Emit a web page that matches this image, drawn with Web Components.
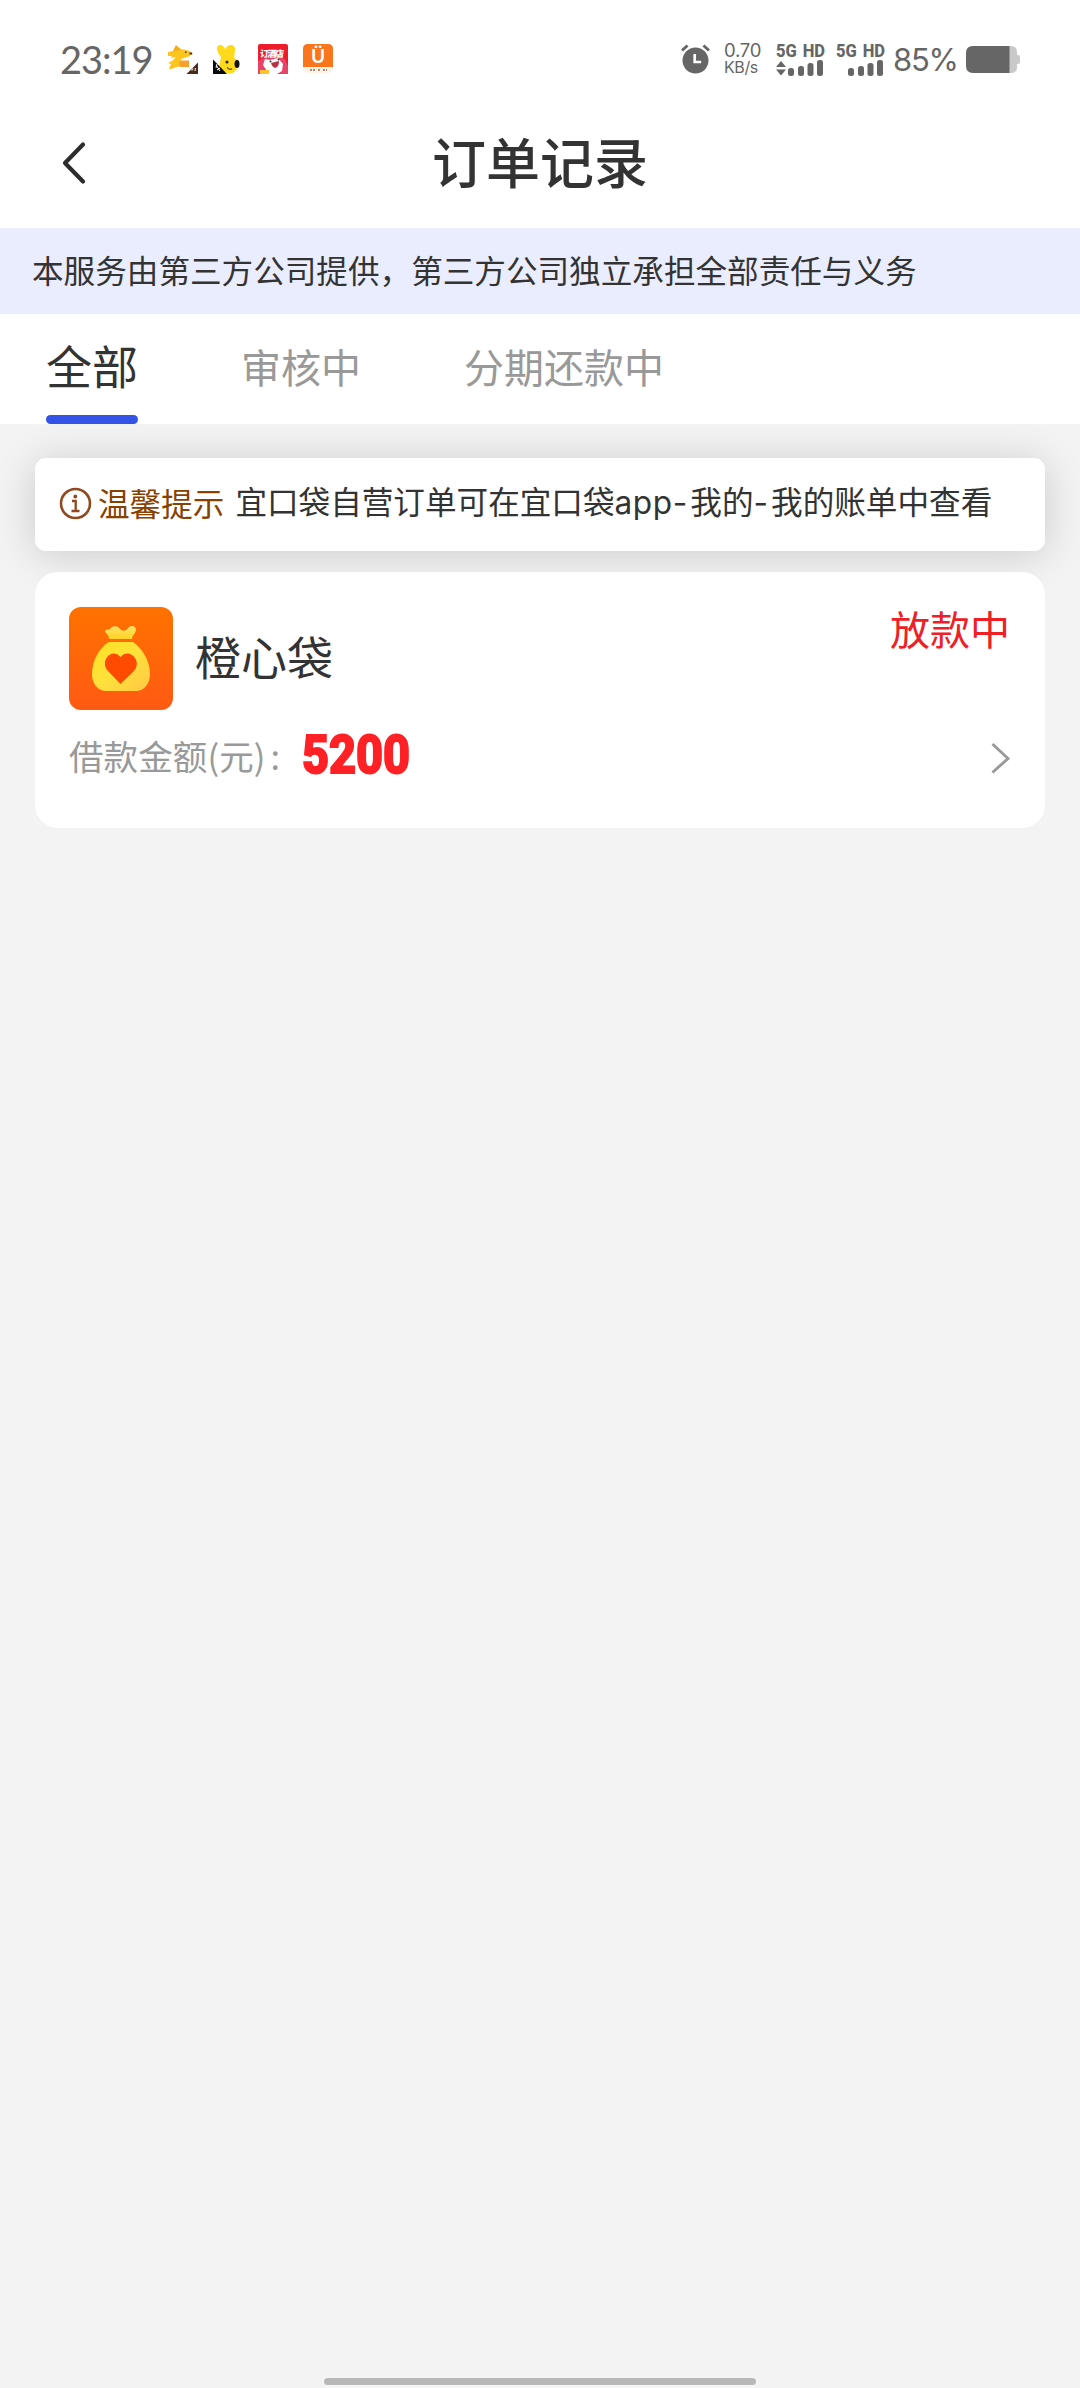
<!DOCTYPE html>
<html lang="zh-CN">
<head>
<meta charset="utf-8">
<title>订单记录</title>
<style>
html,body{margin:0;padding:0;background:#f3f3f3}
body{font-family:"Noto Sans CJK SC",sans-serif;color:#333}
</style>
</head>
<body>
<order-page></order-page>
<script>
const define=(name,html)=>{
  const t=document.createElement('template');
  t.innerHTML=html;
  customElements.define(name,class extends HTMLElement{
    constructor(){super();this.attachShadow({mode:'open'}).appendChild(t.content.cloneNode(true));}
  });
};

define('signal-meter',`<style>
:host{display:flex;flex-direction:column;width:49px;color:#666;font:800 19px/18px Roboto,sans-serif}
span{white-space:nowrap;word-spacing:2px;transform:scaleX(.87);transform-origin:left center}
svg{display:block}
:host([plain]) .arrows{display:none}
</style><span>5G HD</span>
<svg width="49" height="17" viewBox="0 0 49 17" fill="#666"><g class="arrows"><path d="M0 7 5 1l5 6zM0 9.500h10L5 15.500z"/></g><rect x="12" y="8" width="6" height="8" rx="2.500"/><rect x="22" y="6" width="6" height="10" rx="2.500"/><rect x="31.500" y="3" width="6" height="13" rx="2.500"/><rect x="41" y="0" width="6" height="16" rx="2.500"/></svg>`);

define('app-badges',`<style>:host{display:flex;gap:15px}svg{display:block}text{font-family:"Noto Sans CJK SC",sans-serif}</style>
<svg width="30" height="30" viewBox="0 0 30 30"><path d="M0 8 5 7 8 1l5 4 9 2 2 2.500-3 3-8 2.500-1 7-3 1-6 2H1l2-5-3-1 4-7H0z" fill="#fcc41f"/><path d="m5 7 3-5.500L12 6z" fill="#f3ab1b"/><path d="M0 14.500 8 13l-4 4-4 2z" fill="#fff"/><path d="M11.500 16.500H21V23h-9.500z" fill="#f7a030"/><path d="M21.500 8.500h2.700v2h-2.700zM17 7.500h1.500V9H17z" fill="#443019"/><path d="M30 18.500V30H18.500z" fill="#4a2a1b"/><path d="m23.500 26.500 1.500-2m2 2.500.5-3" stroke="#d9c8be" stroke-width="1.300"/></svg>
<svg width="30" height="30" viewBox="0 0 30 30"><path d="M4 6c-1-7 7-6 8.500 0C13 0 23-1 22 6l-1 8c7 1 5 10 0 14-4 4-14-1-15-5l2-10q-3-3-4-7z" fill="#ffd91b"/><path d="M0 15.500V30h14z" fill="#080b0e"/><circle cx="14" cy="18" r="1.600" fill="#322814"/><ellipse cx="24" cy="20" rx="2.500" ry="3.900" fill="#111"/><path d="M14 23.500q3 3 5 1" fill="none" stroke="#70510b" stroke-width="1.200"/><path d="m3 21 4 6m-3-1 3-2m-3-4-1 4" stroke="#fff" stroke-width="1"/></svg>
<svg width="30" height="30" viewBox="0 0 30 30"><rect width="30" height="30" rx="2" fill="#ee1c2b"/><path d="M0 17 7 13h14l6 2 3 7v8H0z" fill="#e8436a"/><path d="m5 21 2-6 5 1 8-2 5 6-1 7-5 3h-8z" fill="#fff"/><path d="m13 19 8-2q0 6-4 7-3-1-4-5z" fill="#b73344"/><circle cx="12.500" cy="17.500" r="1" fill="#333"/><circle cx="20.500" cy="15.500" r="1" fill="#333"/><path d="M2 26h9v4H2z" fill="#ffc235"/><text x="3" y="13" font-size="9" font-weight="900" fill="#fff" textLength="24" transform="skewX(-5)">订酒店</text></svg>
<svg width="30" height="30" viewBox="0 0 30 30"><rect width="30" height="29" rx="5" fill="#fff3e8"/><path d="M0 23V5q0-5 5-5h20q5 0 5 5v18z" fill="#f9761d"/><text x="15" y="19" text-anchor="middle" font-size="19" font-weight="700" fill="#fff" style="font-family:Lato,sans-serif">Ü</text><path d="M7 26h5m3 0h2m3 0h4" stroke="#a98b77" stroke-width="1.800" stroke-dasharray="2 1"/></svg>`);

define('status-bar',`<style>
:host{display:flex;align-items:center;height:96px;padding:22px 60px 0 60px;box-sizing:border-box;color:#666}
.time{font:400 38px/46px Lato,sans-serif;width:91px;letter-spacing:-1px;white-space:nowrap}
app-badges{margin-left:17px}
.alarm{margin-left:auto}
.rate{width:37px;margin-left:14px;font:400 18.500px/17px Inter,sans-serif}
.rate div{white-space:nowrap;letter-spacing:-.2px}.rate div+div{font-size:16px;letter-spacing:-.4px}
signal-meter{margin-left:15px}signal-meter+signal-meter{margin-left:11px}
.pct{font:400 31px/40px Inter,sans-serif;width:62px;margin-left:8px;letter-spacing:-1.300px;white-space:nowrap;position:relative;top:1px}
.bat{margin-left:11px}
svg{display:block;flex:none}
</style>
<div class="time">23:19</div><app-badges></app-badges>
<svg class="alarm" width="29" height="30" viewBox="0 0 29 30"><circle cx="14.500" cy="16.500" r="13" fill="#666"/><path d="M1 6.500 6.500 1.500M28 6.500l-5.500-5" stroke="#666" stroke-width="3" fill="none"/><path d="M13.700 10v8h6.500" stroke="#fff" stroke-width="2.700" fill="none"/></svg>
<div class="rate"><div>0.70</div><div>KB/s</div></div>
<signal-meter></signal-meter><signal-meter plain></signal-meter>
<div class="pct">85%</div>
<svg class="bat" width="54" height="27" viewBox="0 0 54 27"><path d="M42 0h3q6 0 6 6v3h1q2 0 2 2v5q0 2-2 2h-1v3q0 6-6 6h-3z" fill="#c9c9c9"/><path d="M43.500 0v27H7q-7 0-7-7V7q0-7 7-7z" fill="#666"/></svg>`);

define('nav-header',`<style>
:host{display:grid;grid-template-columns:120px 1fr 120px;align-items:center;height:132px}
svg{display:block;margin:2px 0 0 60px}
h1{margin:0;padding-bottom:2px;text-align:center;font-size:54px;line-height:70px;font-weight:500}
</style><svg width="28" height="44" viewBox="0 0 28 44"><path d="M23 3.500 5 22l18 18.500" fill="none" stroke="#2d2d2d" stroke-width="4.200" stroke-linecap="round" stroke-linejoin="round"/></svg><h1><slot></slot></h1>`);

define('service-notice',`<style>:host{display:flex;align-items:center;height:86px;box-sizing:border-box;padding:0 32px 4px;background:#eaedfd;font-size:31.600px;line-height:46px;color:#333;white-space:nowrap}</style><span><slot></slot></span>`);

define('tab-item',`<style>
:host{display:flex;flex-direction:column;height:110px;font-size:40px;line-height:105px;color:#999;white-space:nowrap}
i{display:none}
:host([active]){font-size:46px;line-height:101px;color:#333}
:host([active]) i{display:block;height:9px;border-radius:4.500px;background:#3453e7}
</style><slot></slot><i></i>`);

define('tab-bar',`<style>:host{display:flex;height:110px;padding-left:46px;background:#fff;gap:103px}</style><slot></slot>`);

define('tip-card',`<style>
:host{display:flex;align-items:center;height:93px;box-sizing:border-box;padding:0 24px;border-radius:11px;background:#fff;box-shadow:0 4px 42px rgba(0,0,0,.165);font-size:31.600px;line-height:46px;white-space:nowrap}
svg{display:block;flex:none;margin-bottom:3px}
b{font-weight:400;color:#874100;margin:0 11px 6px 6px}
.msg{font-family:Inter,"Noto Sans CJK SC",sans-serif;margin-bottom:3px}
</style><svg width="33" height="33" viewBox="0 0 33 33" fill="none" stroke="#91491f"><circle cx="16.500" cy="16.500" r="14.500" stroke-width="2.600"/><circle cx="16.300" cy="9.500" r="1.900" fill="#91491f" stroke="none"/><path d="M13 14h3.700v10M12.500 24h8" stroke-width="2.300"/></svg><b><slot name="label"></slot></b><span class="msg"><slot></slot></span>`);

define('brand-icon',`<style>:host{display:block;width:104px;height:103px}svg{display:block}</style>
<svg width="104" height="103" viewBox="0 0 104 103"><defs><linearGradient id="o" x2="0" y2="1"><stop stop-color="#ff7200"/><stop offset="1" stop-color="#ff5a13"/></linearGradient><linearGradient id="n" x2="0" y2="1"><stop stop-color="#ffe366"/><stop offset="1" stop-color="#ffd323"/></linearGradient><linearGradient id="y" x2="1" y2="1"><stop stop-color="#ffe223"/><stop offset=".5" stop-color="#ffe13c"/><stop offset="1" stop-color="#ffc744"/></linearGradient></defs><rect width="104" height="103" rx="12" fill="url(#o)"/><path d="M40 32c0-4-4-6-4-8 0-1.500 3-1 5-2 3-4 8-3 10 0 3 3 6 2 8-1 2-3 8-3 8 2 0 3-4 5-4 9z" fill="url(#n)"/><path d="M40 35h24c8 5 17 18 17 32 0 10-6 17-14 17H37c-8 0-14-7-14-17 0-14 8-27 17-32z" fill="url(#y)"/><path d="M51.500 77 39 64c-9-10 4-24 12.500-14C60 40 74 54 65 64z" fill="#ff4b00"/></svg>`);

define('order-card',`<style>
:host{display:flex;flex-direction:column;height:256px;box-sizing:border-box;padding:35px 35px 0 34px;border-radius:23px;background:#fff}
.head{display:flex;align-items:flex-start;height:103px}
.name{font-size:46px;line-height:97px;margin-left:22px}
.status{margin-left:auto;font-size:40px;line-height:43px;color:#ee2026}
.row{display:flex;align-items:center;height:90px}
.label{font-size:34.500px;line-height:50px;color:#999;white-space:nowrap;width:232px;letter-spacing:.1px}
.label span{margin-left:5px}
.amount{display:block;width:110px;height:56px;font:800 54.500px/56px Roboto,sans-serif;color:#ff2125;-webkit-text-stroke:2px #ff2125;transform:translate(1px,-1px) scaleX(.86);transform-origin:left center;white-space:nowrap}
.go{margin:5px 0 0 auto;display:block}
</style>
<div class="head"><brand-icon></brand-icon><div class="name"><slot name="name"></slot></div><div class="status"><slot name="status"></slot></div></div>
<div class="row"><div class="label"><slot name="label"></slot><span>:</span></div><div class="amount"><slot name="amount"></slot></div>
<svg class="go" width="19" height="32" viewBox="0 0 19 32"><path d="M1.500 2 17 16.500 1.500 30.500" fill="none" stroke="#999" stroke-width="2.900"/></svg></div>`);

define('home-indicator',`<style>:host{display:block;width:432px;height:7px;border-radius:4px;background:#b8b8b8;box-shadow:0 0 1px 1px #f8f8f8}</style>`);

define('order-page',`<style>
:host{display:flex;flex-direction:column;width:1080px;height:2388px;background:#f3f3f3;overflow:hidden}
.top{background:#fff}
main{display:flex;flex-direction:column;gap:21px;padding:34px 35px 0}
home-indicator{margin:auto auto 3px}
.latin{letter-spacing:.6px}.dash{letter-spacing:3px}
</style>
<div class="top"><status-bar></status-bar><nav-header>订单记录</nav-header><service-notice>本服务由第三方公司提供，第三方公司独立承担全部责任与义务</service-notice></div>
<tab-bar><tab-item active>全部</tab-item><tab-item>审核中</tab-item><tab-item>分期还款中</tab-item></tab-bar>
<main><tip-card><span slot="label">温馨提示</span>宜口袋自营订单可在宜口袋<span class="latin">app</span><span class="dash">-</span>我的<span class="dash">-</span>我的账单中查看</tip-card>
<order-card><span slot="name">橙心袋</span><span slot="status">放款中</span><span slot="label">借款金额(元)</span><span slot="amount">5200</span></order-card></main>
<home-indicator></home-indicator>`);
</script>
</body>
</html>
